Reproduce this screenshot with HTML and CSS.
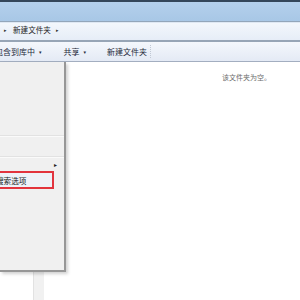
FILE: index.html
```html
<!DOCTYPE html>
<html lang="zh-CN">
<head>
    <meta charset="UTF-8">
    <title>新建文件夹</title>
    <link rel="stylesheet" href="styles.css">
</head>
<body>

<div class="window">
    <div class="titlebar"></div>

    <div class="addressbar">
        <span class="crumb-arrow">&#9656;</span>
        <span class="crumb">新建文件夹</span>
        <span class="crumb-arrow">&#9656;</span>
    </div>

    <div class="commandbar">
        <span class="cmd cmd-first">包含到库中<span class="caret">&#9662;</span></span>
        <span class="cmd">共享<span class="caret">&#9662;</span></span>
        <span class="cmd">新建文件夹</span>
        <span class="cmd-split"></span>
    </div>

    <div class="main">
        <div class="navpane"></div>
        <div class="splitter"></div>
        <div class="content">
            <div class="empty-text">该文件夹为空。</div>
        </div>

        <div class="menu">
            <div class="menu-group menu-group-top"></div>
            <div class="menu-sep"></div>
            <div class="menu-group menu-group-mid"></div>
            <div class="menu-sep"></div>
            <div class="menu-item menu-item-sub">
                <span class="sub-arrow">&#9656;</span>
            </div>
            <div class="menu-item menu-item-hot">
                <span class="menu-label">搜索选项</span>
            </div>
        </div>
    </div>
</div>

</body>
</html>
```

FILE: styles.css
```css
html, body {
    margin: 0;
    padding: 0;
    width: 300px;
    height: 300px;
    overflow: hidden;
    background-color: #ffffff;
    font-family: 'Noto Sans CJK SC', 'Liberation Sans', sans-serif;
}
.window {
    display: flex;
    flex-direction: column;
    height: 300px;
}
.titlebar {
    height: 19px;
    border-top: 2px solid #34465a;
    background: linear-gradient(to bottom, #b4d0ec, #a8c7e6);
    border-bottom: 1px solid #93a6ba;
}
.addressbar {
    height: 17px;
    display: flex;
    align-items: center;
    padding-left: 4px;
    background: linear-gradient(to bottom, #f3f7fc, #e6edf7);
    border-top: 1px solid #dfe8f3;
    border-bottom: 2px solid #97a5b6;
    font-size: 7.6px;
    line-height: 10px;
    color: #1e1e1e;
}
.crumb {
    margin: 0 5px 0 4px;
    padding-bottom: 3px;
}
.crumb-arrow {
    display: inline-block;
    width: 5px;
    padding-bottom: 3px;
    font-family: 'DejaVu Sans', sans-serif;
    font-size: 5px;
    color: #333;
}
.commandbar {
    position: relative;
    height: 19px;
    display: flex;
    align-items: center;
    background: linear-gradient(to bottom, #f4f7fc, #e4eaf5);
    border-bottom: 1px solid #a3aec0;
    font-size: 8px;
    color: #1e2a3a;
}
.cmd {
    margin-right: 21px;
    white-space: nowrap;
}
.cmd-first {
    margin-left: -5px;
    margin-right: 22px;
}
.caret {
    display: inline-block;
    margin-left: 4px;
    font-family: 'DejaVu Sans', sans-serif;
    font-size: 5px;
    vertical-align: 1px;
}
.cmd-split {
    position: absolute;
    left: 150px;
    top: 3px;
    height: 13px;
    border-left: 1px dotted #c0c8d4;
}
.main {
    position: relative;
    flex: 1;
    display: flex;
}
.navpane {
    width: 33px;
    background-color: #ffffff;
}
.splitter {
    width: 10px;
    background-color: #f1f1f1;
    border-left: 1px solid #e2e2e2;
}
.content {
    flex: 1;
    background-color: #ffffff;
    padding-top: 10px;
    padding-left: 178px;
}
.empty-text {
    font-size: 7px;
    color: #6d6d6d;
    white-space: nowrap;
}
.menu {
    position: absolute;
    left: 0;
    top: 0;
    width: 64px;
    height: 208px;
    display: flex;
    flex-direction: column;
    overflow: hidden;
    background-color: #f0f0f0;
    border-right: 2px solid #979797;
    border-bottom: 2px solid #979797;
    box-shadow: 2px 2px 3px rgba(0, 0, 0, 0.18);
}
.menu-group-top {
    height: 73px;
}
.menu-sep {
    height: 1px;
    background-color: #e2e2e2;
    border-bottom: 1px solid #fafafa;
}
.menu-group-mid {
    height: 19px;
}
.menu-item {
    height: 12px;
    display: flex;
    align-items: center;
}
.menu-item-sub {
    justify-content: flex-end;
    padding-right: 7px;
}
.sub-arrow {
    font-family: 'DejaVu Sans', sans-serif;
    font-size: 6px;
    color: #222;
}
.menu-item-hot {
    width: 52px;
    height: 14px;
    margin-top: 1px;
    border: 2px solid #e2343e;
    border-left: none;
    background-color: #eef2f8;
}
.menu-label {
    margin-left: -4px;
    font-size: 7.6px;
    color: #1a1a1a;
    white-space: nowrap;
}
```
